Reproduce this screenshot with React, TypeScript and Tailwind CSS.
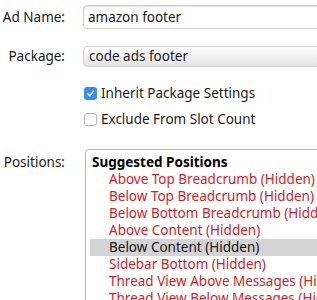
export default function App() {
  const options = [
    "Above Top Breadcrumb (Hidden)",
    "Below Top Breadcrumb (Hidden)",
    "Below Bottom Breadcrumb (Hidden)",
    "Above Content (Hidden)",
    "Below Content (Hidden)",
    "Sidebar Bottom (Hidden)",
    "Thread View Above Messages (Hidden)",
    "Thread View Below Messages (Hidden)",
  ];
  const selected = 4;

  return (
    <div
      className="w-[317px] h-[300px] overflow-hidden bg-white text-[13.5px] text-[#1a1a1a]"
      style={{ fontFamily: '"Noto Sans", Tahoma, sans-serif' }}
    >
      {/* Ad name */}
      <div className="flex items-center pt-[5px]">
        <div className="w-[65px] text-right shrink-0">Ad Name:</div>
        <div className="ml-[18px] h-[24px] flex-1 min-w-[260px] rounded-[4px] border border-[#cfcfcf] bg-white shadow-[inset_0_1px_2px_rgba(0,0,0,0.12)] flex items-center pl-[4px] whitespace-nowrap">
          amazon footer
        </div>
      </div>

      {/* Package */}
      <div className="flex items-center mt-[17px]">
        <div className="w-[65px] text-right shrink-0">Package:</div>
        <div className="ml-[18px] h-[21px] flex-1 min-w-[260px] rounded-[4px] border border-[#d4d4d4] bg-gradient-to-b from-[#ffffff] to-[#e4e4e4] flex items-center pl-[5px] whitespace-nowrap">
          code ads footer
        </div>
      </div>

      {/* Checkboxes */}
      <div className="ml-[84px] mt-[18px] flex flex-col gap-[9px]">
        <label className="h-[17px] flex items-center gap-[4px] whitespace-nowrap">
          <span className="w-[13px] h-[13px] rounded-[3px] bg-[#3b8ff0] flex items-center justify-center">
            <svg width="9" height="9" viewBox="0 0 10 10">
              <path d="M2 5.2 L4.2 7.4 L8.2 2.6" fill="none" stroke="white" strokeWidth="1.6" strokeLinecap="round" strokeLinejoin="round" />
            </svg>
          </span>
          Inherit Package Settings
        </label>
        <label className="h-[17px] flex items-center gap-[4px] whitespace-nowrap">
          <span className="w-[13px] h-[13px] rounded-[3px] border border-[#b5b5b5] bg-white" />
          Exclude From Slot Count
        </label>
      </div>

      {/* Positions */}
      <div className="flex mt-[21px]">
        <div className="w-[65px] text-right shrink-0 pt-[3px]">Positions:</div>
        <div className="ml-[20px] flex-1 min-w-[260px] h-[200px] rounded-tl-[4px] border border-[#b9b9b9] pl-[4px] pt-[3px] whitespace-nowrap">
          <div className="font-bold leading-[18px] pl-[2px] text-black">Suggested Positions</div>
          {options.map((o, i) => (
            <div
              key={o}
              className={
                i === selected
                  ? "leading-[17px] pl-[19px] bg-[#d4d4d4] text-[#111]"
                  : "leading-[17px] pl-[19px] text-[#d51b27]"
              }
            >
              {o}
            </div>
          ))}
        </div>
      </div>
    </div>
  );
}
